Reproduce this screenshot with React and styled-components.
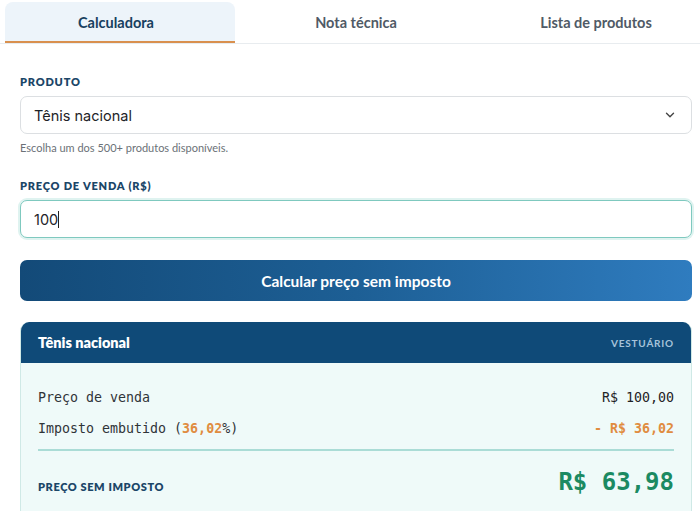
import React from "react";
import styled, { createGlobalStyle } from "styled-components";

const Global = createGlobalStyle`
  html, body { margin: 0; padding: 0; background: #fff; }
  body { font-family: Lato, "Noto Sans", sans-serif; overflow: hidden; }
  * { box-sizing: border-box; }
`;

const Page = styled.div`
  width: 700px;
  height: 511px;
  overflow: hidden;
  background: #fff;
`;

const Tabs = styled.div`
  display: flex;
  gap: 10px;
  padding: 2px 5px 0;
  height: 44px;
  border-bottom: 1px solid #e8ecef;
  overflow: hidden;
`;

const Tab = styled.div`
  flex: 0 0 230px;
  display: flex;
  align-items: center;
  justify-content: center;
  padding: 2px 8px 0 0;
  font-size: 14.5px;
  font-weight: 700;
  color: ${(p) => (p.$active ? "#17405f" : "#505a66")};
  background: ${(p) => (p.$active ? "#edf4fa" : "transparent")};
  border-radius: 8px 8px 0 0;
  border-bottom: 2px solid ${(p) => (p.$active ? "#d9904e" : "transparent")};
`;

const Form = styled.div`
  display: flex;
  flex-direction: column;
  padding: 31px 8px 0 20px;
`;

const Label = styled.div`
  font-size: 11px;
  font-weight: 800;
  letter-spacing: 0.8px;
  color: #1b4668;
  margin-bottom: 7px;
  line-height: 14px;
`;

const Field = styled.div`
  display: flex;
  align-items: center;
  justify-content: space-between;
  height: 38px;
  padding: 0 14px 0 13px;
  border: 1px solid ${(p) => (p.$focus ? "#7fc9bf" : "#dcdfe2")};
  box-shadow: ${(p) => (p.$focus ? "0 0 0 2px #dff3f0" : "none")};
  border-radius: 7px;
  background: #fff;
  font-family: Inter, "Liberation Sans", sans-serif;
  font-size: 14.5px;
  color: #1e2328;
`;

const Caret = styled.span`
  display: inline-block;
  width: 1px;
  height: 17px;
  background: #222;
  vertical-align: -3px;
`;

const Help = styled.div`
  font-size: 11px;
  color: #6b7177;
  margin-top: 7px;
  margin-bottom: 25px;
`;

const Button = styled.div`
  margin-top: 22px;
  height: 41px;
  border-radius: 7px;
  background: linear-gradient(90deg, #134a78 0%, #1d5f95 50%, #2f7cbf 100%);
  color: #fff;
  display: flex;
  align-items: center;
  justify-content: center;
  font-size: 15.5px;
  font-weight: 700;
`;

const Card = styled.div`
  margin-top: 21px;
  border-radius: 9px 9px 0 0;
  border: 1px solid #cfe9e6;
  border-top: none;
  background: #effaf9;
  overflow: hidden;
`;

const CardHead = styled.div`
  height: 41px;
  background: #0f4a78;
  display: flex;
  align-items: center;
  justify-content: space-between;
  padding: 0 17px 0 17px;
`;

const CardTitle = styled.div`
  color: #fff;
  font-size: 14.5px;
  font-weight: 800;
`;

const Category = styled.div`
  color: #a6c3da;
  font-size: 10px;
  font-weight: 700;
  letter-spacing: 0.8px;
`;

const CardBody = styled.div`
  padding: 19px 17px 20px 17px;
`;

const Row = styled.div`
  display: flex;
  justify-content: space-between;
  align-items: center;
  height: 31px;
  font-family: "DejaVu Sans Mono", "Liberation Mono", monospace;
  font-size: 13.3px;
  color: #2f3438;
`;

const Amount = styled.span`
  color: ${(p) => (p.$tone === "orange" ? "#e08c40" : "#1f2326")};
  font-weight: ${(p) => (p.$tone === "orange" ? 700 : 400)};
`;

const Orange = styled.b`
  color: #e08c40;
  font-weight: 700;
`;

const Divider = styled.div`
  height: 2px;
  background: #aadcd6;
  margin: 5px 0 0;
`;

const Total = styled.div`
  display: flex;
  justify-content: space-between;
  align-items: center;
  height: 62px;
`;

const TotalLabel = styled.div`
  font-size: 11px;
  font-weight: 800;
  letter-spacing: 0.6px;
  color: #1b4668;
  padding-top: 8px;
`;

const TotalValue = styled.div`
  font-family: "DejaVu Sans Mono", "Liberation Mono", monospace;
  font-size: 24px;
  font-weight: 700;
  color: #1b8a62;
`;

function Chevron() {
  return (
    <svg width="14" height="14" viewBox="0 0 24 24" fill="none" stroke="#444" strokeWidth="2.4" strokeLinecap="round" strokeLinejoin="round">
      <path d="M6 9l6 6 6-6" />
    </svg>
  );
}

export default function App() {
  return (
    <Page>
      <Global />
      <Tabs>
        <Tab $active>Calculadora</Tab>
        <Tab>Nota técnica</Tab>
        <Tab>Lista de produtos</Tab>
      </Tabs>
      <Form>
        <Label>PRODUTO</Label>
        <Field>
          <span>Tênis nacional</span>
          <Chevron />
        </Field>
        <Help>Escolha um dos 500+ produtos disponíveis.</Help>
        <Label>PREÇO DE VENDA (R$)</Label>
        <Field $focus>
          <span>100<Caret /></span>
        </Field>
        <Button>Calcular preço sem imposto</Button>
        <Card>
          <CardHead>
            <CardTitle>Tênis nacional</CardTitle>
            <Category>VESTUÁRIO</Category>
          </CardHead>
          <CardBody>
            <Row>
              <span>Preço de venda</span>
              <Amount>R$ 100,00</Amount>
            </Row>
            <Row>
              <span>Imposto embutido (<Orange>36,02</Orange>%)</span>
              <Amount $tone="orange">- R$ 36,02</Amount>
            </Row>
            <Divider />
            <Total>
              <TotalLabel>PREÇO SEM IMPOSTO</TotalLabel>
              <TotalValue>R$ 63,98</TotalValue>
            </Total>
          </CardBody>
        </Card>
      </Form>
    </Page>
  );
}
